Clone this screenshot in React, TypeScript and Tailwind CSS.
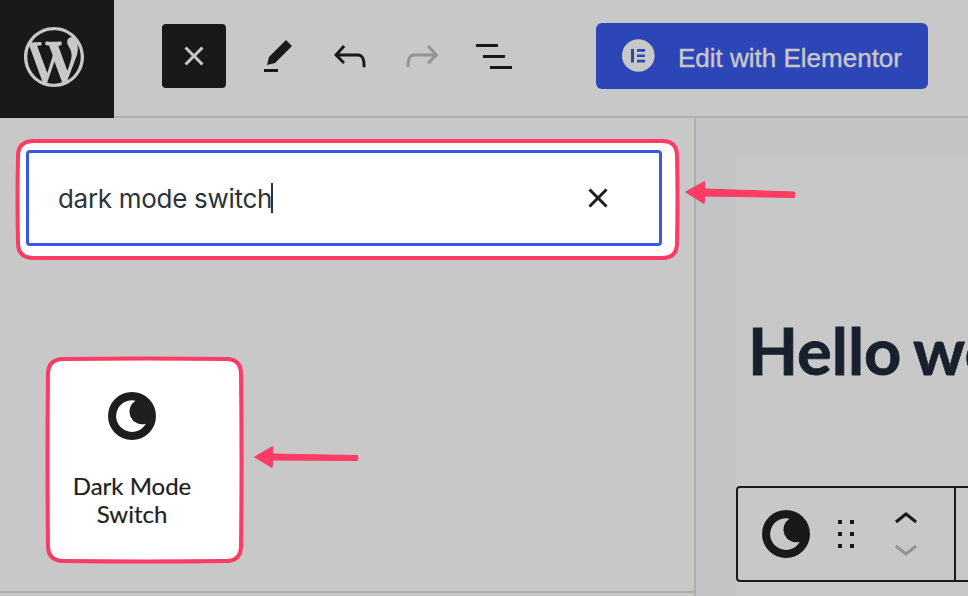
import React from "react";

const CLOSE = "M12 13.06l3.712 3.713 1.061-1.06L13.061 12l3.712-3.712-1.06-1.06L12 10.938 8.288 7.227l-1.061 1.06L10.939 12l-3.712 3.712 1.06 1.061L12 13.061z";
const PENCIL = "m19 7-3-3-8.5 8.5-1 4 4-1L19 7Zm-7 11.5H5V20h7v-1.5Z";
const UNDO = "M18.3 11.7c-.6-.6-1.4-.9-2.3-.9H6.7l2.9-3.3-1.1-1-4.5 5L8.5 16l1-1-2.7-2.7H16c.5 0 .9.2 1.3.5 1 1 1 3.4 1 4.5v.3h1.5v-.2c0-1.5 0-4.3-1.5-5.7z";
const REDO = "M15.6 6.5l-1.1 1 2.9 3.3H8c-.9 0-1.7.3-2.3.9-1.4 1.5-1.4 4.2-1.4 5.6v.2h1.5v-.3c0-1.1 0-3.5 1-4.5.3-.3.7-.5 1.3-.5h9.2L14.5 15l1.1 1.1 4.6-4.6-4.6-5z";
const LIST = "M3 6h11v1.5H3V6Zm3.5 5.5h11V13h-11v-1.5ZM21 17H10v1.5h11V17Z";
const DRAG = "M8 7h2V5H8v2zm0 6h2v-2H8v2zm0 6h2v-2H8v2zm6-14v2h2V5h-2zm0 8h2v-2h-2v2zm0 6h2v-2h-2v2z";
const UP = "M6.5 12.4L12 8l5.5 4.4-.9 1.2L12 10l-4.5 3.6-1-1.2z";
const DOWN = "M17.5 11.6L12 16l-5.5-4.4.9-1.2L12 14l4.5-3.6 1 1.2z";
const WP = "M20 10c0-5.51-4.49-10-10-10C4.48 0 0 4.49 0 10c0 5.52 4.48 10 10 10 5.51 0 10-4.48 10-10zM7.78 15.37L4.37 6.22c.55-.02 1.17-.08 1.17-.08.5-.06.44-1.13-.06-1.11 0 0-1.45.11-2.37.11-.18 0-.37 0-.58-.01C4.12 2.69 6.87 1.11 10 1.11c2.33 0 4.45.87 6.05 2.34-.68-.11-1.65.39-1.65 1.58 0 .74.45 1.36.9 2.1.35.61.55 1.36.55 2.46 0 1.49-1.4 5-1.4 5l-3.03-8.37c.54-.02.82-.17.82-.17.5-.05.44-1.25-.06-1.22 0 0-1.44.12-2.38.12-.87 0-2.33-.12-2.33-.12-.5-.03-.56 1.2-.06 1.22l.92.08 1.26 3.41zM17.41 10c.24-.64.74-1.87.43-4.25.7 1.29 1.05 2.71 1.05 4.25 0 3.29-1.73 6.24-4.4 7.78.97-2.59 1.94-5.2 2.92-7.78zM6.1 18.09C3.12 16.65 1.11 13.53 1.11 10c0-1.3.23-2.48.72-3.59C3.25 10.3 4.67 14.2 6.1 18.09zm4.03-6.63l2.58 6.98c-.86.29-1.76.45-2.71.45-.79 0-1.57-.11-2.29-.33.81-2.38 1.62-4.74 2.42-7.1z";

function Icon({ d, className = "" }: { d: string; className?: string }) {
  return (
    <svg viewBox="0 0 24 24" fill="currentColor" className={`size-12 shrink-0 ${className}`}>
      <path d={d} />
    </svg>
  );
}

function MoonIcon({ className }: { className: string }) {
  return (
    <svg viewBox="-24 -24 48 48" className={`size-12 shrink-0 ${className}`}>
      <path
        fill="currentColor"
        fillRule="evenodd"
        d="M0-24A24 24 0 1 1 0 24A24 24 0 1 1 0-24ZM3.5-15.3A15.8 15.8 0 1 0 13.8 7.7A12.7 12.7 0 0 1 3.5-15.3Z"
      />
    </svg>
  );
}

function Header() {
  return (
    <header className="flex h-[118px] shrink-0">
      <div className="flex w-[114px] items-start bg-[#191919] pt-[27px] pl-6">
        <svg viewBox="0 0 20 20" className="size-[60px] text-[#c8c8c8]" fill="currentColor">
          <path d={WP} />
        </svg>
      </div>
      <div className="flex flex-1 items-start border-b-2 border-[#afafaf] pl-12 text-[#191919]">
        <button className="mt-6 flex size-16 items-center justify-center rounded bg-[#191919] text-[#c8c8c8]">
          <Icon d={CLOSE} />
        </button>
        <div className="mt-8 ml-7 flex gap-6">
          <Icon d={PENCIL} />
          <Icon d={UNDO} />
          <Icon d={REDO} className="text-[#949494]" />
          <Icon d={LIST} />
        </div>
        <button className="mt-[23px] ml-[78px] flex h-[66px] w-[332px] shrink-0 rounded-md bg-[#2c46b7] pt-4 pl-[26px] text-[#c8c8c8]">
          <svg viewBox="0 0 33 33" className="size-[33px] shrink-0">
            <circle cx="16.3" cy="16.5" r="16.3" fill="currentColor" />
            <path d="M9 10h3v13.500H9zM15 10h8v2.700h-8zM15 15.400h8v2.700h-8zM15 20.800h8v2.700h-8z" fill="#2c46b7" />
          </svg>
          <span className="mt-[3px] ml-[23px] font-['Liberation_Sans',Arial,sans-serif] text-[26px] leading-8 whitespace-nowrap [-webkit-text-stroke:0.4px_#c8c8c8]">
            Edit with Elementor
          </span>
        </button>
      </div>
    </header>
  );
}

function Inserter() {
  return (
    <aside className="flex w-[696px] shrink-0 flex-col border-r-2 border-[#afafaf]">
      <div className="flex h-[475px] shrink-0 flex-col items-start border-b-2 border-[#afafaf] pt-[22px] pl-[18px]">
        <div className="h-[118px] w-[659px] rounded-[14px] bg-white px-2 pt-[10px]">
          <div className="flex h-24 w-[636px] items-center rounded border-[3px] border-[#3858e9] bg-white pl-[29px]">
            <span className="pt-0.5 font-[Inter,sans-serif] text-[26px] leading-8 tracking-[-0.3px] whitespace-nowrap text-[#2c3338]">
              dark mode switch
            </span>
            <span className="-ml-px h-[30px] w-0.5 bg-[#2c3338]" />
            <Icon d={CLOSE} className="mr-[37px] ml-auto text-[#1e1e1e]" />
          </div>
        </div>
        <div className="mt-[101px] ml-[30px] flex h-[202px] w-[193px] flex-col items-start rounded-[14px] bg-white pt-[33px]">
          <div className="flex w-[168px] flex-col items-center text-[#1e1e1e]">
            <MoonIcon className="text-[#1e1e1e]" />
            <span className="mt-8 w-[130px] text-center font-[Lato,sans-serif] text-[24px] leading-7 [-webkit-text-stroke:0.2px_#1e1e1e]">
              Dark Mode Switch
            </span>
          </div>
        </div>
      </div>
    </aside>
  );
}

function Canvas() {
  return (
    <main className="flex min-w-0 flex-1 overflow-hidden bg-[#c2c4c6] pt-10 pl-10">
      <div className="flex min-w-0 flex-1 flex-col overflow-hidden bg-[#c8c8c8]">
        <h1 className="mt-[152px] ml-3 font-[Lato,sans-serif] text-[65px] leading-20 font-bold whitespace-nowrap text-[#18202e] [-webkit-text-stroke:0.8px_#18202e] [word-spacing:-3px]">
          Hello world
        </h1>
        <div className="mt-[96px] flex h-24 w-[400px] shrink-0 rounded border-2 border-[#191919] text-[#191919]">
          <div className="flex w-[218px] shrink-0 items-center border-r-2 border-[#191919] pl-6">
            <MoonIcon className="text-[#191919]" />
            <Icon d={DRAG} className="ml-3" />
            <div className="ml-3 flex flex-col">
              <Icon d={UP} className="-mb-5" />
              <Icon d={DOWN} className="text-[#949494]" />
            </div>
          </div>
        </div>
      </div>
    </main>
  );
}

function Annotations() {
  return (
    <svg viewBox="0 0 968 596" className="pointer-events-none absolute inset-0 h-[596px] w-[968px]" fill="none">
      <g stroke="#fc3c64" strokeWidth="4" strokeLinejoin="round">
        <path d="M34 141Q347 140 662 141Q677 141 677 156Q678 199 677 243Q677 258 662 258Q347 259 34 258Q18 258 18 243Q17 199 18 156Q18 141 34 141Z" />
        <path d="M64 359Q145 358 226 359Q241 359 241 374Q242 460 241 546Q241 561 226 561Q145 562 64 561Q48 561 48 546Q47 460 48 374Q48 359 64 359Z" />
      </g>
      <g fill="#fc3c64" stroke="#fc3c64" strokeLinejoin="round">
        <path d="M685.500 192L704.500 181.500L705 189L794.500 192Q795 195 794.500 197.500L705 196L704 203.500Z" />
        <path d="M254.500 457L272.500 446.500L273 454L357.500 455.500Q358 458 357.500 460.500L273 460L272 467.500Z" />
      </g>
    </svg>
  );
}

export default function App() {
  return (
    <div className="relative flex h-[596px] w-[968px] flex-col overflow-hidden bg-[#c8c8c8]">
      <Header />
      <div className="flex min-h-0 flex-1">
        <Inserter />
        <Canvas />
      </div>
      <Annotations />
    </div>
  );
}
